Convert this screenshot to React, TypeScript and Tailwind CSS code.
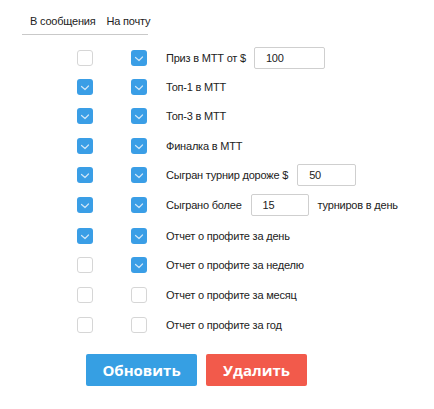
import React from "react";

type Row = {
  h: number;
  msg: boolean;
  mail: boolean;
  label: React.ReactNode;
};

function Box({ on }: { on: boolean }) {
  return on ? (
    <span className="flex h-4 w-4 items-center justify-center rounded-[3px] bg-[#3a9ee6]">
      <svg width="10" height="8" viewBox="0 0 10 8" fill="none">
        <path d="M1.5 3.5 L5 6.5 L8.5 3" stroke="#cfe6f8" strokeWidth="1.2" strokeLinecap="round" strokeLinejoin="round" />
      </svg>
    </span>
  ) : (
    <span className="block h-4 w-4 rounded-[3px] border border-[#d6d6d6] bg-white" />
  );
}

function Field({ value, w }: { value: string; w: string }) {
  return (
    <span className={`flex h-[22px] items-center rounded-[2px] border border-[#cfcfcf] bg-white pl-[11px] text-[#222] ${w}`}>
      {value}
    </span>
  );
}

const rows: Row[] = [
  {
    h: 29,
    msg: false,
    mail: true,
    label: (
      <>
        <span>Приз в МТТ от $</span>
        <span className="ml-[8px]"><Field value="100" w="w-[71px]" /></span>
      </>
    ),
  },
  { h: 29, msg: true, mail: true, label: "Топ-1 в МТТ" },
  { h: 30, msg: true, mail: true, label: "Топ-3 в МТТ" },
  { h: 29, msg: true, mail: true, label: "Финалка в МТТ" },
  {
    h: 30,
    msg: true,
    mail: true,
    label: (
      <>
        <span>Сыгран турнир дороже $</span>
        <span className="ml-[9px]"><Field value="50" w="w-[59px]" /></span>
      </>
    ),
  },
  {
    h: 31,
    msg: true,
    mail: true,
    label: (
      <>
        <span>Сыграно более</span>
        <span className="mx-[9px]"><Field value="15" w="w-[58px]" /></span>
        <span>турниров в день</span>
      </>
    ),
  },
  { h: 29, msg: true, mail: true, label: "Отчет о профите за день" },
  { h: 30, msg: false, mail: true, label: "Отчет о профите за неделю" },
  { h: 30, msg: false, mail: false, label: "Отчет о профите за месяц" },
  { h: 30, msg: false, mail: false, label: "Отчет о профите за год" },
];

export default function App() {
  return (
    <div className="h-[409px] w-[434px] bg-white font-['Liberation_Sans',Arial,sans-serif] text-[11px] tracking-[-0.2px] text-[#222]">
      <div className="ml-[22px] flex h-[35px] w-[126px] items-end whitespace-nowrap border-b border-[#c9c9c9] pb-[5px]">
        <span className="ml-[8px]">В сообщения</span>
        <span className="ml-[11px]">На почту</span>
      </div>
      <div className="mt-[15px] flex flex-col">
        {rows.map((r, i) => (
          <div key={i} className="flex items-start" style={{ height: r.h }}>
            <div className="ml-[22px] flex w-[76px] justify-end pr-[5px]">
              <Box on={r.msg} />
            </div>
            <div className="flex w-[50px] justify-end pr-[1px]">
              <Box on={r.mail} />
            </div>
            <div className="ml-[18px] flex h-4 items-center whitespace-nowrap">{r.label}</div>
          </div>
        ))}
      </div>
      <div className="ml-[86px] mt-[7px] flex gap-[9px] tracking-normal">
        <button className="h-[32px] w-[111px] rounded-[2px] bg-[#369fe3] font-['Open_Sans',sans-serif] text-[15px] font-bold text-white">
          Обновить
        </button>
        <button className="h-[32px] w-[101px] rounded-[2px] bg-[#f25a4b] font-['Open_Sans',sans-serif] text-[15px] font-bold text-white">
          Удалить
        </button>
      </div>
    </div>
  );
}
